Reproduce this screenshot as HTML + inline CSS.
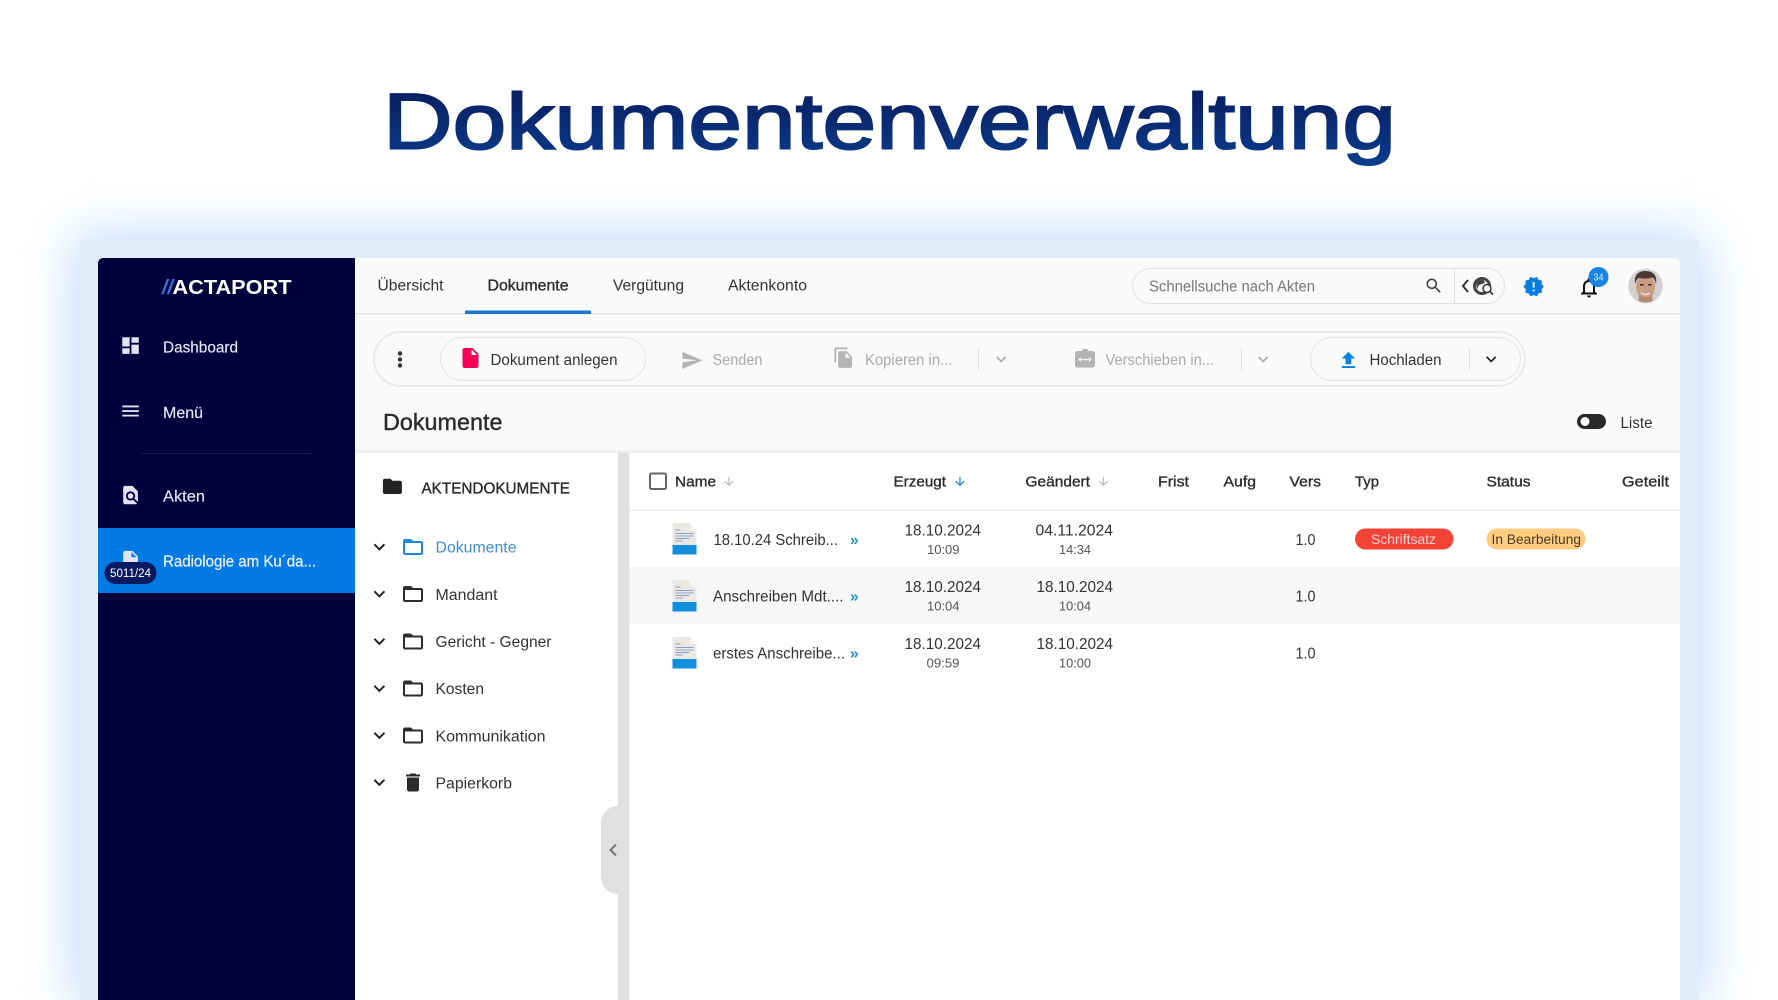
<!DOCTYPE html>
<html lang="de"><head><meta charset="utf-8"><title>Dokumentenverwaltung</title>
<style>
html,body{margin:0;padding:0;width:1778px;height:1000px;overflow:hidden;background:#fff}
#wrap{position:absolute;left:0;top:0;width:1778px;height:1000px;overflow:hidden}
#frame{position:absolute;left:80px;top:240px;width:1618px;height:760px;background:#dfedfb;box-shadow:0 0 50px 5px #bcd9fb}
svg{position:absolute;left:0;top:0}
text{font-family:"Liberation Sans",sans-serif;font-size:15.5px;fill:#333}
.m{stroke:#333;stroke-width:.3}
.b{font-size:15px;fill:#2c2c2c;stroke:#2c2c2c;stroke-width:.35}
.s{fill:#e8e5f6;stroke:#e8e5f6;stroke-width:.15}
.g{fill:#aaa}
.t{font-size:12.5px;fill:#555}
</style></head><body>
<div id="wrap">
<div id="frame"></div>
<svg width="1778" height="1000" viewBox="0 0 1778 1000" xmlns="http://www.w3.org/2000/svg">
<defs>
<linearGradient id="tg" x1="0" y1="0" x2="0" y2="1"><stop offset="0" stop-color="#0a1858"/><stop offset="1" stop-color="#0a3c8c"/></linearGradient>
<path id="chev" d="M16.59 8.59L12 13.17 7.41 8.59 6 10l6 6 6-6z"/>
<path id="folder" d="M20 6h-8l-2-2H4c-1.1 0-1.99.9-1.99 2L2 18c0 1.1.9 2 2 2h16c1.1 0 2-.9 2-2V8c0-1.1-.9-2-2-2zm0 12H4V8h16v10z"/>
<path id="down" d="M20 12l-1.41-1.41L13 16.17V4h-2v12.17l-5.58-5.59L4 12l8 8 8-8z"/>
<g id="doc">
<path d="M0 0h17l7 7v24H0z" fill="#e9e8e2"/><path d="M17 0l7 7h-7z" fill="#f6f5f2"/>
<path d="M3 7h5M3 10.500h18M3 13h18M3 15.500h14M3 18h7" stroke="#8f9fc4" stroke-width="1" fill="none"/>
<rect y="22" width="24" height="9.500" fill="#0f8fdc"/>
</g>
<clipPath id="av"><circle cx="1645.500" cy="286" r="17"/></clipPath>
<clipPath id="app"><rect x="98" y="258" width="1582" height="760" rx="5"/></clipPath>
</defs>

<text x="383" y="148.500" textLength="1013" lengthAdjust="spacingAndGlyphs" style="font-size:79px;fill:url(#tg);stroke:url(#tg);stroke-width:2">Dokumentenverwaltung</text>

<g clip-path="url(#app)">
<rect x="98" y="258" width="1582" height="742" fill="#fafafa"/>
<rect x="98" y="258" width="257" height="742" fill="#02003c"/>
<rect x="98" y="528" width="257" height="65" fill="#027ae6"/>
</g>

<!-- sidebar -->
<text x="162" y="294" textLength="11" lengthAdjust="spacingAndGlyphs" style="font-size:20px;font-weight:bold;fill:#2a7be0;font-style:italic">//</text>
<text x="172.500" y="294" textLength="119" lengthAdjust="spacingAndGlyphs" style="font-size:20.500px;font-weight:bold;fill:#fff">ACTAPORT</text>
<path transform="translate(119.500,334.500) scale(.92)" fill="#e4e1f3" d="M3 13h8V3H3v10zm0 8h8v-6H3v6zm10 0h8V11h-8v10zm0-18v6h8V3h-8z"/>
<text class="s" x="163" y="352.500" textLength="75" lengthAdjust="spacingAndGlyphs">Dashboard</text>
<path transform="translate(119.500,400) scale(.92)" fill="#e4e1f3" d="M3 18h18v-2H3v2zm0-5h18v-2H3v2zm0-7v2h18V6H3z"/>
<text class="s" x="163" y="418" textLength="40" lengthAdjust="spacingAndGlyphs">Menü</text>
<rect x="141.500" y="453" width="170" height="1" fill="#1b1a56"/>
<path transform="translate(119.500,484) scale(.92)" fill="#e4e1f3" d="M20 19.590V8l-6-6H6c-1.100 0-1.990.9-1.990 2L4 20c0 1.100.89 2 1.990 2H18c.45 0 .85-.15 1.190-.4l-4.430-4.430c-.8.52-1.740.83-2.760.83-2.760 0-5-2.240-5-5s2.240-5 5-5 5 2.240 5 5c0 1.020-.31 1.960-.83 2.750L20 19.590zM9 13c0 1.660 1.340 3 3 3s3-1.340 3-3-1.340-3-3-3-3 1.340-3 3z"/>
<text class="s" x="163" y="501.500" textLength="42" lengthAdjust="spacingAndGlyphs">Akten</text>
<path transform="translate(119.500,549) scale(.92)" fill="#e4e1f3" d="M6 2c-1.100 0-1.990.9-1.990 2L4 20c0 1.100.89 2 1.990 2H18c1.100 0 2-.9 2-2V8l-6-6H6zm7 7V3.500L18.500 9H13z"/>
<rect x="104.500" y="562" width="52" height="22" rx="11" fill="#0b1a60"/>
<text x="110" y="577" textLength="41" lengthAdjust="spacingAndGlyphs" style="font-size:11.500px;fill:#fff">5011/24</text>
<text x="163" y="566.500" textLength="153" lengthAdjust="spacingAndGlyphs" style="fill:#eef4ff;stroke:#eef4ff;stroke-width:.2">Radiologie am Ku´da...</text>

<!-- top bar -->
<rect x="355" y="313" width="1325" height="1.500" fill="#e4e4e4"/>
<text x="377.500" y="290.500" textLength="66" lengthAdjust="spacingAndGlyphs">Übersicht</text>
<text class="b" x="487.500" y="290.500" textLength="81" lengthAdjust="spacingAndGlyphs" style="font-size:15.500px">Dokumente</text>
<text x="613" y="290.500" textLength="71" lengthAdjust="spacingAndGlyphs">Vergütung</text>
<text x="728" y="290.500" textLength="79" lengthAdjust="spacingAndGlyphs">Aktenkonto</text>
<rect x="465" y="310.500" width="126" height="3.500" fill="#1976d2"/>

<rect x="1132.500" y="268.500" width="372" height="35" rx="17.500" fill="#fafafa" stroke="#e2e2e2"/>
<text x="1149" y="291.500" textLength="166" lengthAdjust="spacingAndGlyphs" style="fill:#777">Schnellsuche nach Akten</text>
<path transform="translate(1424,276) scale(.82)" fill="#444" d="M15.500 14h-.79l-.28-.27C15.410 12.590 16 11.110 16 9.500 16 5.910 13.090 3 9.500 3S3 5.910 3 9.500 5.910 16 9.500 16c1.610 0 3.090-.59 4.230-1.570l.27.28v.79l5 4.990L20.490 19l-4.990-5zm-6 0C7.010 14 5 11.990 5 9.500S7.010 5 9.500 5 14 7.010 14 9.500 11.990 14 9.500 14z"/>
<rect x="1454" y="269" width="1" height="34" fill="#e2e2e2"/>
<path d="M1468 280l-5 6 5 6" fill="none" stroke="#333" stroke-width="2"/>
<circle cx="1482" cy="286" r="7.500" fill="none" stroke="#444" stroke-width="3"/>
<path d="M1476 282l7-3 2 4-6 2-2 4z" fill="#444"/>
<circle cx="1487" cy="288.500" r="4" fill="#fafafa" stroke="#333" stroke-width="1.500"/>
<path d="M1490 291.500l3 3" stroke="#333" stroke-width="1.600"/>

<path transform="translate(1522.500,275.500) scale(.93)" fill="#0a7be0" d="M23 12l-2.440-2.780.34-3.680-3.610-.82-1.890-3.180L12 3 8.600 1.540 6.710 4.720l-3.610.81.34 3.680L1 12l2.440 2.780-.34 3.690 3.610.82 1.890 3.180L12 21l3.400 1.460 1.890-3.180 3.610-.82-.34-3.680L23 12zm-10 5h-2v-2h2v2zm0-4h-2V7h2v6z"/>
<path transform="translate(1577,275.500) scale(1)" fill="#111" d="M12 22c1.100 0 2-.9 2-2h-4c0 1.100.89 2 2 2zm6-6v-5c0-3.070-1.640-5.640-4.500-6.320V4c0-.83-.67-1.500-1.500-1.500s-1.500.67-1.500 1.500v.68C7.630 5.360 6 7.920 6 11v5l-2 2v1h16v-1l-2-2zm-2 1H8v-6c0-2.480 1.510-4.500 4-4.500s4 2.020 4 4.500v6z"/>
<circle cx="1598.500" cy="277" r="10" fill="#1a83e6"/>
<text x="1593.500" y="280.500" textLength="10" lengthAdjust="spacingAndGlyphs" style="font-size:10px;fill:#d8ecff">34</text>
<g clip-path="url(#av)">
<rect x="1628" y="269" width="36" height="36" fill="#d2d0ce"/>
<ellipse cx="1645.500" cy="287" rx="9.500" ry="12" fill="#c99c84"/>
<path d="M1635 284c-1-10 4-13 10.500-13s12 3 10.500 13c-1-4-2-6-4-6.500-4 1.500-9 1-13 .5-2 1-3 3-4 6z" fill="#4a3a32"/>
<path d="M1639 295q6.500 5 13 0l1 10h-15z" fill="#b38a74"/>
<path d="M1641 293q4.500 3 9 0" stroke="#f0e0d8" stroke-width="1.400" fill="none"/>
<rect x="1640" y="284" width="3.500" height="1.500" fill="#3a2a24"/><rect x="1648" y="284" width="3.500" height="1.500" fill="#3a2a24"/>
</g>
<circle cx="1645.500" cy="286" r="17" fill="none" stroke="#ddd" stroke-width="1"/>

<!-- toolbar -->
<rect x="374" y="332" width="1151" height="54" rx="27" fill="#fafafa" stroke="#eaeaea" stroke-width="2"/>
<circle cx="400" cy="353.500" r="2.200" fill="#333"/><circle cx="400" cy="359.500" r="2.200" fill="#333"/><circle cx="400" cy="365.500" r="2.200" fill="#333"/>
<rect x="440.500" y="337.500" width="205" height="43" rx="21.500" fill="#fafafa" stroke="#e4e4e4"/>
<path transform="translate(458.500,346) scale(1)" fill="#f50057" d="M6 2c-1.100 0-1.990.9-1.990 2L4 20c0 1.100.89 2 1.990 2H18c1.100 0 2-.9 2-2V8l-6-6H6zm7 7V3.500L18.500 9H13z"/>
<text x="490.500" y="365" textLength="127" lengthAdjust="spacingAndGlyphs">Dokument anlegen</text>
<path transform="translate(680.500,349) scale(.95)" fill="#b4b4b4" d="M2.010 21L23 12 2.010 3 2 10l15 2-15 2z"/>
<text class="g" x="712.500" y="365" textLength="50" lengthAdjust="spacingAndGlyphs">Senden</text>
<path transform="translate(832.500,346.500) scale(.93)" fill="#b4b4b4" d="M16 1H4c-1.100 0-2 .9-2 2v14h2V3h12V1zm-1 4l6 6v10c0 1.100-.9 2-2 2H7.990C6.890 23 6 22.100 6 21l.01-14c0-1.100.89-2 1.990-2h7zm-1 7h5.500L14 6.500V12z"/>
<text class="g" x="865" y="365" textLength="87.500" lengthAdjust="spacingAndGlyphs">Kopieren in...</text>
<rect x="978" y="348" width="1" height="22" fill="#e0e0e0"/>
<use href="#chev" transform="translate(991,349) scale(.85)" fill="#aaa"/>
<rect x="1075" y="351" width="20" height="16.500" rx="2.500" fill="#b4b4b4"/>
<rect x="1082" y="349" width="6" height="4" rx="1.500" fill="#b4b4b4"/>
<path d="M1079.500 359.500h11M1081 357.500l-2 2 2 2M1089 357.500l2 2-2 2" stroke="#f2f2f2" stroke-width="1.200" fill="none"/>
<text class="g" x="1105.500" y="365" textLength="108.500" lengthAdjust="spacingAndGlyphs">Verschieben in...</text>
<rect x="1241" y="348" width="1" height="22" fill="#e0e0e0"/>
<use href="#chev" transform="translate(1253,349) scale(.85)" fill="#aaa"/>
<rect x="1310.500" y="337.500" width="210" height="43" rx="21.500" fill="#fafafa" stroke="#e4e4e4"/>
<path transform="translate(1337,349) scale(.95)" fill="#0a80e0" d="M5 20h14v-2H5v2zm0-10h4v6h6v-6h4l-7-7-7 7z"/>
<text x="1369.500" y="365" textLength="72" lengthAdjust="spacingAndGlyphs">Hochladen</text>
<rect x="1469" y="348" width="1" height="22" fill="#e0e0e0"/>
<use href="#chev" transform="translate(1481,349) scale(.85)" fill="#222"/>

<text x="383" y="430" textLength="119.500" lengthAdjust="spacingAndGlyphs" style="font-size:23px;fill:#2b2b2b;stroke:#2b2b2b;stroke-width:.4">Dokumente</text>
<rect x="1577" y="414" width="29" height="15" rx="7.500" fill="#2a2a2a"/>
<circle cx="1585" cy="421.500" r="4.500" fill="#fff"/>
<text x="1620.500" y="428" textLength="32" lengthAdjust="spacingAndGlyphs">Liste</text>

<!-- panels -->
<rect x="355" y="450" width="1325" height="3" fill="#efefef"/>
<rect x="355" y="453" width="263" height="547" fill="#fff"/>
<rect x="618" y="453" width="11.500" height="547" fill="#e0e0e0"/>
<rect x="629.500" y="453" width="1050.500" height="547" fill="#fff"/>
<rect x="629.500" y="567" width="1050.500" height="57" fill="#f7f7f7"/>
<rect x="629.500" y="509.500" width="1050.500" height="1.200" fill="#e6e6e6"/>
<path d="M618 806c-9 0-17 7-17 17v54c0 10 8 17 17 17z" fill="#e0e0e0"/>
<path d="M616 844.500l-5.500 5.500 5.500 5.500" fill="none" stroke="#777" stroke-width="2"/>

<!-- tree -->
<path transform="translate(381,475) scale(.95)" fill="#222" d="M10 4H4c-1.100 0-1.990.9-1.990 2L2 18c0 1.100.9 2 2 2h16c1.100 0 2-.9 2-2V8c0-1.100-.9-2-2-2h-8l-2-2z"/>
<text x="421.500" y="493.500" textLength="148.500" lengthAdjust="spacingAndGlyphs" class="m" style="fill:#2a2a2a;stroke:#2a2a2a;stroke-width:.35">AKTENDOKUMENTE</text>

<use href="#chev" transform="translate(368,535.500) scale(.95)" fill="#222"/>
<use href="#folder" transform="translate(401,535)" fill="#1b87d8"/>
<text x="435.500" y="552.500" textLength="81" lengthAdjust="spacingAndGlyphs" style="fill:#3a8fd2">Dokumente</text>

<use href="#chev" transform="translate(368,582.500) scale(.95)" fill="#222"/>
<use href="#folder" transform="translate(401,582)" fill="#2c2c2c"/>
<text x="435.500" y="600" textLength="62" lengthAdjust="spacingAndGlyphs">Mandant</text>

<use href="#chev" transform="translate(368,630) scale(.95)" fill="#222"/>
<use href="#folder" transform="translate(401,629.500)" fill="#2c2c2c"/>
<text x="435.500" y="647" textLength="116" lengthAdjust="spacingAndGlyphs">Gericht - Gegner</text>

<use href="#chev" transform="translate(368,677) scale(.95)" fill="#222"/>
<use href="#folder" transform="translate(401,676.500)" fill="#2c2c2c"/>
<text x="435.500" y="694" textLength="48.500" lengthAdjust="spacingAndGlyphs">Kosten</text>

<use href="#chev" transform="translate(368,724) scale(.95)" fill="#222"/>
<use href="#folder" transform="translate(401,723.500)" fill="#2c2c2c"/>
<text x="435.500" y="741.500" textLength="110" lengthAdjust="spacingAndGlyphs">Kommunikation</text>

<use href="#chev" transform="translate(368,771) scale(.95)" fill="#222"/>
<path transform="translate(401,770.500)" fill="#2c2c2c" d="M6 19c0 1.100.9 2 2 2h8c1.100 0 2-.9 2-2V7H6v12zM19 4h-3.500l-1-1h-5l-1 1H5v2h14V4z"/>
<text x="435.500" y="788.500" textLength="76.500" lengthAdjust="spacingAndGlyphs">Papierkorb</text>

<!-- table header -->
<rect x="650" y="473.500" width="16" height="15.500" rx="1.500" fill="#fff" stroke="#666" stroke-width="2"/>
<text class="b" x="675" y="486.500" textLength="41" lengthAdjust="spacingAndGlyphs">Name</text>
<use href="#down" transform="translate(722,474.500) scale(.58)" fill="#bbb"/>
<text class="b" x="893.500" y="486.500" textLength="52.500" lengthAdjust="spacingAndGlyphs">Erzeugt</text>
<use href="#down" transform="translate(953,474.500) scale(.58)" fill="#1a80d8"/>
<text class="b" x="1025.500" y="486.500" textLength="64.500" lengthAdjust="spacingAndGlyphs">Geändert</text>
<use href="#down" transform="translate(1096.500,474.500) scale(.58)" fill="#bbb"/>
<text class="b" x="1158" y="486.500" textLength="31" lengthAdjust="spacingAndGlyphs">Frist</text>
<text class="b" x="1223.500" y="486.500" textLength="32.500" lengthAdjust="spacingAndGlyphs">Aufg</text>
<text class="b" x="1289.500" y="486.500" textLength="31.500" lengthAdjust="spacingAndGlyphs">Vers</text>
<text class="b" x="1355" y="486.500" textLength="24" lengthAdjust="spacingAndGlyphs">Typ</text>
<text class="b" x="1486.500" y="486.500" textLength="44" lengthAdjust="spacingAndGlyphs">Status</text>
<text class="b" x="1622" y="486.500" textLength="47" lengthAdjust="spacingAndGlyphs">Geteilt</text>

<!-- rows -->
<use href="#doc" x="672.500" y="523"/>
<text x="713.500" y="545" textLength="124.500" lengthAdjust="spacingAndGlyphs">18.10.24 Schreib...</text>
<text x="850" y="545" textLength="8.500" lengthAdjust="spacingAndGlyphs" style="fill:#2a8ad8;font-weight:bold">»</text>
<text x="904.500" y="535.500" textLength="76.500" lengthAdjust="spacingAndGlyphs">18.10.2024</text>
<text class="t" x="927" y="554" textLength="32.500" lengthAdjust="spacingAndGlyphs">10:09</text>
<text x="1035.500" y="535.500" textLength="77.500" lengthAdjust="spacingAndGlyphs">04.11.2024</text>
<text class="t" x="1059" y="554" textLength="32" lengthAdjust="spacingAndGlyphs">14:34</text>
<text x="1295.500" y="545" textLength="20" lengthAdjust="spacingAndGlyphs">1.0</text>
<rect x="1355" y="528.500" width="98.500" height="21" rx="10.500" fill="#f44336"/>
<text x="1371" y="544" textLength="65" lengthAdjust="spacingAndGlyphs" style="font-size:14px;fill:#ffd2ce">Schriftsatz</text>
<rect x="1486.500" y="528.500" width="99" height="21" rx="10.500" fill="#ffcc80"/>
<text x="1491.500" y="544" textLength="89.500" lengthAdjust="spacingAndGlyphs" style="font-size:14px;fill:#4a3a1e">In Bearbeitung</text>

<use href="#doc" x="672.500" y="580"/>
<text x="713" y="601.500" textLength="130.500" lengthAdjust="spacingAndGlyphs">Anschreiben Mdt....</text>
<text x="850" y="601.500" textLength="8.500" lengthAdjust="spacingAndGlyphs" style="fill:#2a8ad8;font-weight:bold">»</text>
<text x="904.500" y="592" textLength="76.500" lengthAdjust="spacingAndGlyphs">18.10.2024</text>
<text class="t" x="927" y="610.500" textLength="32.500" lengthAdjust="spacingAndGlyphs">10:04</text>
<text x="1036.500" y="592" textLength="76.500" lengthAdjust="spacingAndGlyphs">18.10.2024</text>
<text class="t" x="1059" y="610.500" textLength="32" lengthAdjust="spacingAndGlyphs">10:04</text>
<text x="1295.500" y="601.500" textLength="20" lengthAdjust="spacingAndGlyphs">1.0</text>

<use href="#doc" x="672.500" y="637"/>
<text x="713" y="658.500" textLength="132" lengthAdjust="spacingAndGlyphs">erstes Anschreibe...</text>
<text x="850" y="658.500" textLength="8.500" lengthAdjust="spacingAndGlyphs" style="fill:#2a8ad8;font-weight:bold">»</text>
<text x="904.500" y="649" textLength="76.500" lengthAdjust="spacingAndGlyphs">18.10.2024</text>
<text class="t" x="926.500" y="667.500" textLength="33" lengthAdjust="spacingAndGlyphs">09:59</text>
<text x="1036.500" y="649" textLength="76.500" lengthAdjust="spacingAndGlyphs">18.10.2024</text>
<text class="t" x="1059" y="667.500" textLength="32" lengthAdjust="spacingAndGlyphs">10:00</text>
<text x="1295.500" y="658.500" textLength="20" lengthAdjust="spacingAndGlyphs">1.0</text>
</svg>
</div>
</body></html>
